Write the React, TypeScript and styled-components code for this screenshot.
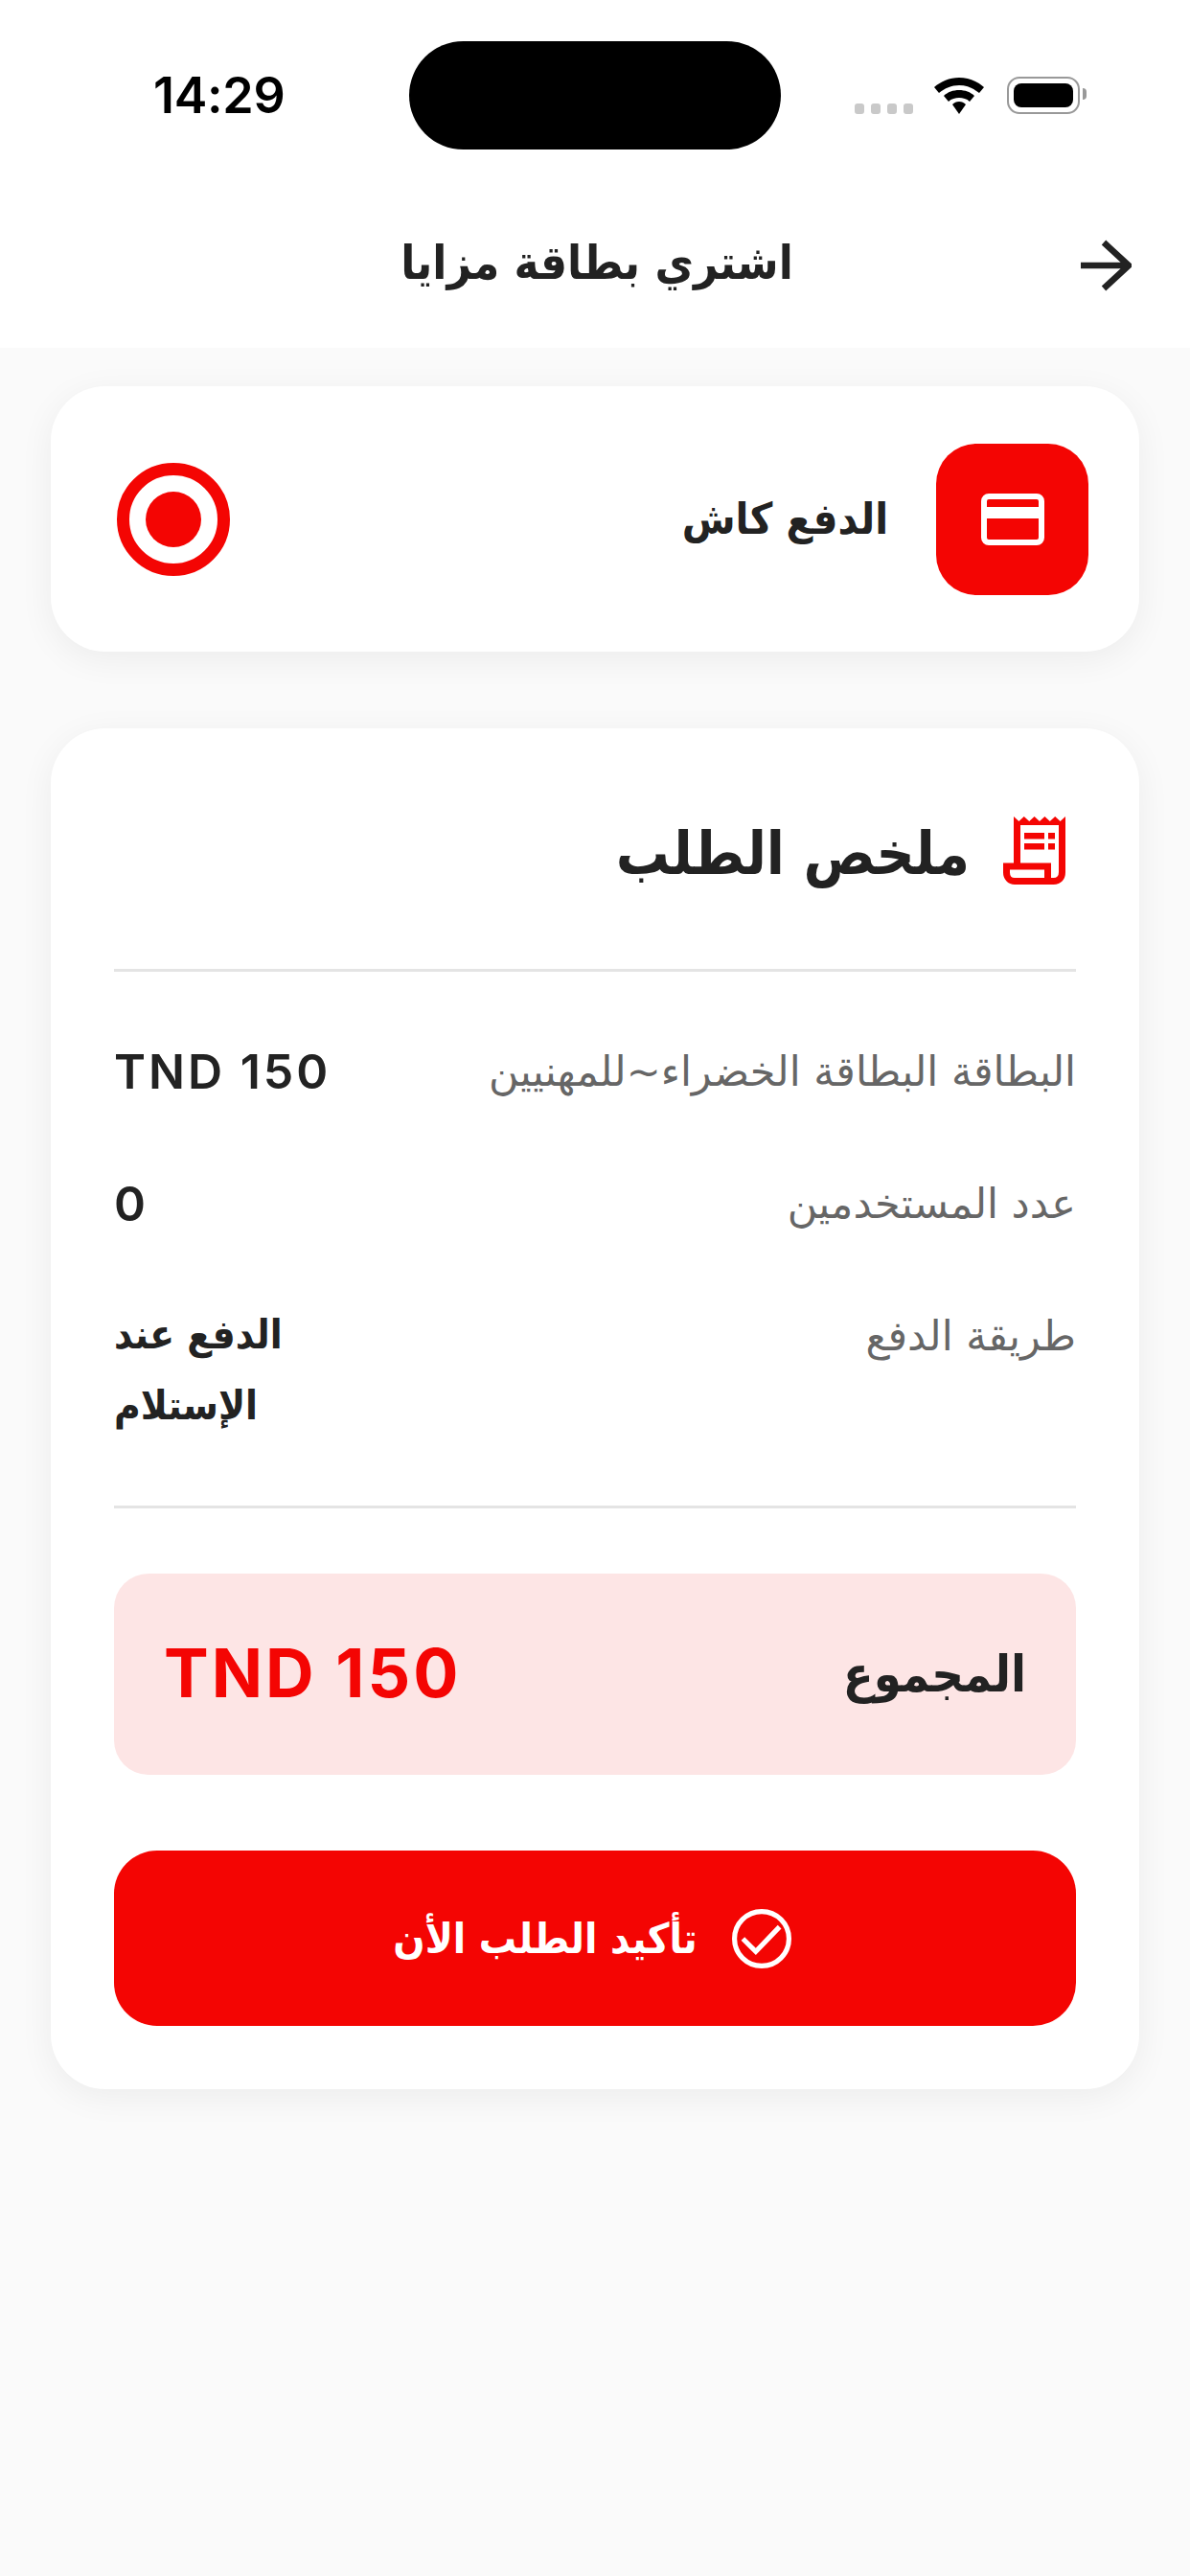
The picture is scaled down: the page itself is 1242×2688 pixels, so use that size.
import styled, {createGlobalStyle} from "styled-components";

const GlobalStyle = createGlobalStyle`
  html, body {
    margin: 0;
    padding: 0;
    background: #fafafa;
  }
  * {
    box-sizing: border-box;
  }
`

const ARABIC_FONT = `"DejaVu Sans", "Noto Sans", sans-serif`
const LATIN_FONT = `Inter, "Liberation Sans", sans-serif`

const rows = [
    {label: "البطاقة البطاقة الخضراء~للمهنيين", value: "TND 150", latin: true},
    {label: "عدد المستخدمين", value: "0", latin: true},
    {label: "طريقة الدفع", value: "الدفع عند الإستلام", latin: false},
]

export default function App() {
    return (
        <Page>
            <GlobalStyle/>
            <Top>
                <StatusBar>
                    <Time>14:29</Time>
                    <Island/>
                    <StatusIcons>
                        <SignalDots>
                            <i/><i/><i/><i/>
                        </SignalDots>
                        <svg width="52" height="38" viewBox="0 0 52 38">
                            <path fill="#000" d="M26 0c10 0 19 4 26 10l-5 6C41 11 34 8 26 8S11 11 5 16L0 10C7 4 16 0 26 0z"/>
                            <path fill="#000" d="M26 13c6 0 12 2 16 6l-5 6c-3-3-7-4-11-4s-8 1-11 4l-5-6c4-4 10-6 16-6z"/>
                            <path fill="#000" d="M26 25c3 0 5 1 7 3l-7 10-7-10c2-2 4-3 7-3z"/>
                        </svg>
                        <Battery>
                            <BatteryFill/>
                        </Battery>
                    </StatusIcons>
                </StatusBar>
                <Header>
                    <BackIcon width="54" height="54" viewBox="0 0 54 54" fill="none" stroke="#222" strokeWidth="6.5">
                        <path d="M1 27h49M25 3l26 24-26 24"/>
                    </BackIcon>
                    <HeaderTitle>اشتري بطاقة مزايا</HeaderTitle>
                </Header>
            </Top>

            <Content>
                <PaymentCard>
                    <PaymentMethod>
                        <PaymentIcon>
                            <svg width="66" height="54" viewBox="0 0 66 54" fill="none">
                                <rect x="3" y="3" width="60" height="48" rx="5" stroke="#fff" strokeWidth="6"/>
                                <rect x="3" y="14" width="60" height="12" fill="#fff"/>
                            </svg>
                        </PaymentIcon>
                        <PaymentLabel>الدفع كاش</PaymentLabel>
                    </PaymentMethod>
                    <Radio>
                        <RadioDot/>
                    </Radio>
                </PaymentCard>

                <SummaryCard>
                    <SummaryHeader>
                        <ReceiptIcon width="65" height="71" viewBox="0 0 65 71" fill="none">
                            <path
                                d="M14.5 52V6M61.5 6v52c0 6-3 9.5-9 9.5H12c-5 0-8.5-4-8.5-9V52H50M46.5 52v15"
                                stroke="#f40503"
                                strokeWidth="7"
                            />
                            <path
                                fill="#f40503"
                                d="M11 0l5.4 5 5.4-5 5.4 5 5.4-5 5.4 5 5.4-5 5.4 5 5.4-5 5.4 5 5.4-5v9H11z"
                            />
                            <rect x="22" y="17" width="21" height="6.5" fill="#f40503"/>
                            <rect x="22" y="28" width="21" height="6.5" fill="#f40503"/>
                            <rect x="47" y="17" width="7" height="6.5" fill="#f40503"/>
                            <rect x="47" y="28" width="7" height="6.5" fill="#f40503"/>
                        </ReceiptIcon>
                        <SummaryTitle>ملخص الطلب</SummaryTitle>
                    </SummaryHeader>

                    <Details>
                        {rows.map(row => (
                            <Row key={row.label}>
                                <RowLabel>{row.label}</RowLabel>
                                <RowValue $latin={row.latin} dir={row.latin ? "ltr" : "rtl"}>{row.value}</RowValue>
                            </Row>
                        ))}
                    </Details>

                    <TotalBox>
                        <TotalLabel>المجموع</TotalLabel>
                        <TotalValue dir="ltr">TND 150</TotalValue>
                    </TotalBox>

                    <ConfirmButton>
                        <svg width="62" height="62" viewBox="0 0 60 60" fill="none" stroke="#fff" strokeWidth="5">
                            <circle cx="30" cy="30" r="27.5"/>
                            <path d="M11 30l13 13 24-25" strokeWidth="5"/>
                        </svg>
                        <span>تأكيد الطلب الأن</span>
                    </ConfirmButton>
                </SummaryCard>
            </Content>
        </Page>
    )
}

const Page = styled.div`
  direction: rtl;
  width: 1242px;
  min-height: 2688px;
  background: #fafafa;
  font-family: ${ARABIC_FONT};
  color: #222;
`

const Top = styled.div`
  height: 363px;
  background: #fff;
`

const StatusBar = styled.div`
  direction: ltr;
  height: 199px;
  padding: 43px 115px 0 160px;
  display: flex;
  justify-content: space-between;
  align-items: flex-start;
`

const Time = styled.div`
  width: 140px;
  margin-top: 28px;
  font-family: ${LATIN_FONT};
  font-size: 52px;
  line-height: 58px;
  font-weight: 600;
  letter-spacing: -0.3px;
  color: #000;
`

const Island = styled.div`
  width: 388px;
  height: 113px;
  margin-left: 127px;
  background: #000;
  border-radius: 57px;
`

const StatusIcons = styled.div`
  display: flex;
  align-items: flex-end;
  margin-top: 37px;
  margin-left: auto;
`

const SignalDots = styled.div`
  display: flex;
  gap: 6.5px;
  margin-right: 22px;

  i {
    width: 10.5px;
    height: 11px;
    border-radius: 3px;
    background: #c9c9c9;
  }
`

const Battery = styled.div`
  position: relative;
  width: 76px;
  height: 39px;
  margin-left: 24px;
  padding: 5px;
  border: 2.5px solid #999;
  border-radius: 13px;

  &::after {
    content: "";
    position: absolute;
    top: 10px;
    right: -9px;
    width: 4px;
    height: 12px;
    background: #999;
    border-radius: 0 4px 4px 0;
  }
`

const BatteryFill = styled.div`
  height: 100%;
  background: #000;
  border-radius: 8px;
`

const Header = styled.div`
  position: relative;
  display: flex;
  align-items: center;
  justify-content: center;
  height: 150px;
  padding: 0 62px;
`

const BackIcon = styled.svg`
  position: absolute;
  right: 61px;
  top: 51px;
`

const HeaderTitle = styled.div`
  font-size: 49px;
  font-weight: 700;
  font-stretch: condensed;
  padding-left: 4px;
`

const Content = styled.div`
  padding: 40px 53px;
  display: flex;
  flex-direction: column;
  gap: 80px;
`

const Card = styled.div`
  background: #fff;
  border-radius: 57px;
  box-shadow: 0 8px 36px rgba(0, 0, 0, 0.06);
`

const PaymentCard = styled(Card)`
  height: 277px;
  padding: 0 53px 0 69px;
  display: flex;
  align-items: center;
  justify-content: space-between;
`

const PaymentMethod = styled.div`
  display: flex;
  align-items: center;
  gap: 50px;
`

const PaymentIcon = styled.div`
  width: 159px;
  height: 158px;
  border-radius: 42px;
  background: #f40503;
  display: flex;
  align-items: center;
  justify-content: center;
`

const PaymentLabel = styled.div`
  font-size: 45px;
  font-weight: 700;
  font-stretch: condensed;
`

const Radio = styled.div`
  width: 118px;
  height: 118px;
  border: 13px solid #f40503;
  border-radius: 50%;
  display: flex;
  align-items: center;
  justify-content: center;
`

const RadioDot = styled.div`
  width: 58px;
  height: 58px;
  border-radius: 50%;
  background: #f40503;
`

const SummaryCard = styled(Card)`
  height: 1420px;
  padding: 90px 66px 66px;
  display: flex;
  flex-direction: column;
`

const SummaryHeader = styled.div`
  height: 164px;
  display: flex;
  align-items: flex-start;
  gap: 35px;
  padding-right: 11px;
  border-bottom: 3px solid #e4e4e4;
`

const ReceiptIcon = styled.svg`
  margin-top: 2px;
`

const SummaryTitle = styled.div`
  margin-top: 5px;
  font-size: 62px;
  line-height: 72px;
  font-weight: 700;
  font-stretch: condensed;
`

const Details = styled.div`
  height: 560px;
  padding-top: 69px;
  display: flex;
  flex-direction: column;
  gap: 68px;
  border-bottom: 3px solid #e4e4e4;
`

const Row = styled.div`
  display: flex;
  justify-content: space-between;
  align-items: flex-start;
`

const RowLabel = styled.div`
  font-size: 43px;
  line-height: 70px;
  color: #666;
`

const RowValue = styled.div<{$latin: boolean}>`
  width: 240px;
  margin-top: ${p => (p.$latin ? "0" : "-3px")};
  text-align: left;
  line-height: ${p => (p.$latin ? "70px" : "74px")};
  font-family: ${p => (p.$latin ? LATIN_FONT : ARABIC_FONT)};
  font-size: ${p => (p.$latin ? "50px" : "42px")};
  font-weight: ${p => (p.$latin ? 600 : 700)};
  font-stretch: ${p => (p.$latin ? "normal" : "condensed")};
  letter-spacing: ${p => (p.$latin ? "3px" : "normal")};
`

const TotalBox = styled.div`
  height: 210px;
  margin-top: 68px;
  padding: 0 52px;
  border-radius: 36px;
  background: #fde5e5;
  display: flex;
  align-items: center;
  justify-content: space-between;
`

const TotalLabel = styled.div`
  font-size: 52px;
  font-weight: 700;
  font-stretch: condensed;
`

const TotalValue = styled.div`
  margin-top: -3px;
  font-family: ${LATIN_FONT};
  font-size: 70px;
  font-weight: 700;
  letter-spacing: 3px;
  color: #f40503;
`

const ConfirmButton = styled.div`
  height: 183px;
  margin-top: 79px;
  padding-right: 6px;
  border-radius: 45px;
  background: #f40503;
  color: #fff;
  font-size: 43.5px;
  font-weight: 700;
  font-stretch: condensed;
  display: flex;
  align-items: center;
  justify-content: center;
  gap: 36px;
`
